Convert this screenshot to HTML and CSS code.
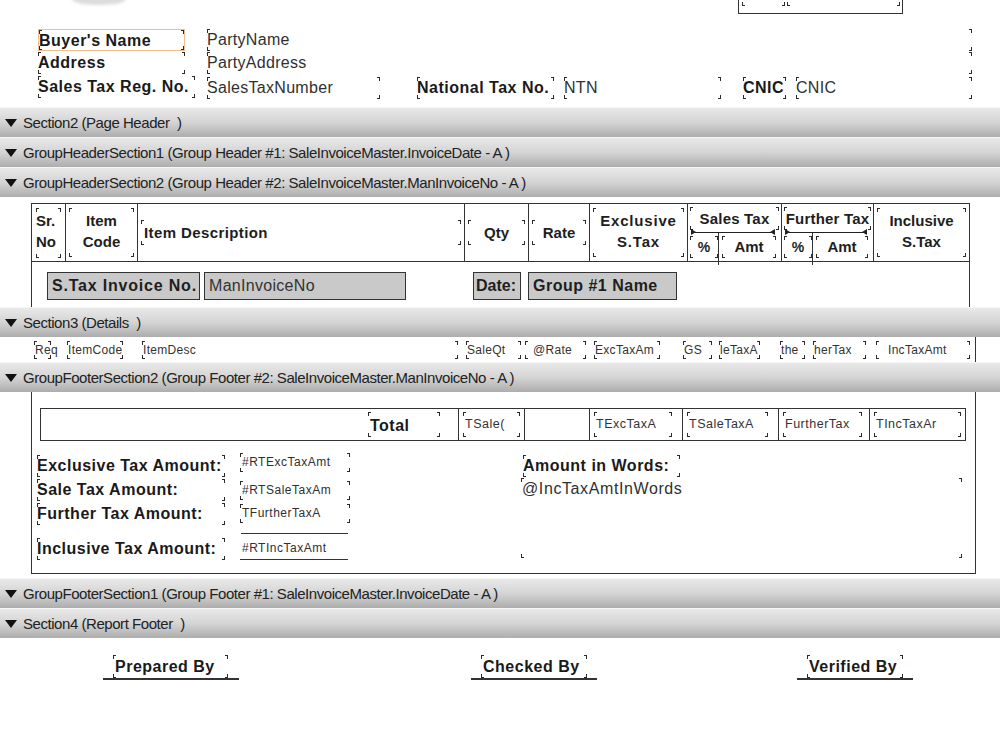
FILE: index.html
```html
<!DOCTYPE html>
<html>
<head>
<meta charset="utf-8">
<title>Sale Invoice Report Designer</title>
<link rel="stylesheet" href="styles.css">
</head>
<body>
<div class="sec rh">
  <div class="logo"></div>
  <div class="topbox"><div class="f tb1"></div><div class="f tb2"></div></div>
  <div class="f o b sel buyer">Buyer's Name</div>
  <div class="f o b addr">Address</div>
  <div class="f o b stax">Sales Tax Reg. No.</div>
  <div class="f o pname">PartyName</div>
  <div class="f o paddr">PartyAddress</div>
  <div class="f o stn">SalesTaxNumber</div>
  <div class="f o b ntl">National Tax No.</div>
  <div class="f o ntn">NTN</div>
  <div class="f o b cnicl">CNIC</div>
  <div class="f o cnic">CNIC</div>
</div>

<div class="bar">Section2 (Page Header&nbsp; )</div>
<div class="bar">GroupHeaderSection1 (Group Header #1: SaleInvoiceMaster.InvoiceDate - A )</div>
<div class="bar">GroupHeaderSection2 (Group Header #2: SaleInvoiceMaster.ManInvoiceNo - A )</div>

<div class="sec gh2">
  <div class="itable">
    <div class="ihead">
      <div class="hc"><div class="f hf two">Sr.<br>No</div></div>
      <div class="hc"><div class="f hf two ctr">Item<br>Code</div></div>
      <div class="hc mid"><div class="f hf1 desc">Item Description</div></div>
      <div class="hc mid"><div class="f hf1 ctr">Qty</div></div>
      <div class="hc mid"><div class="f hf1 ctr">Rate</div></div>
      <div class="hc"><div class="f hf two ctr sp">Exclusive<br>S.Tax</div></div>
      <div class="hc split">
        <div class="f stop">Sales Tax</div>
        <div class="arr"></div>
        <div class="sub"><div class="f pc">%</div><div class="amt"><div class="f ac">Amt</div></div></div>
      </div>
      <div class="hc split">
        <div class="f stop">Further Tax</div>
        <div class="arr"></div>
        <div class="sub"><div class="f pc">%</div><div class="amt"><div class="f ac">Amt</div></div></div>
      </div>
      <div class="hc"><div class="f hf two ctr">Inclusive<br>S.Tax</div></div>
    </div>
    <div class="ibody">
      <div class="gbox b g1">S.Tax Invoice No.</div>
      <div class="gbox g2">ManInvoiceNo</div>
      <div class="gbox b g3">Date:</div>
      <div class="gbox b g4">Group #1 Name</div>
    </div>
  </div>
</div>

<div class="bar">Section3 (Details&nbsp; )</div>

<div class="sec det">
  <div class="f d d1">Req</div>
  <div class="f d d2">ItemCode</div>
  <div class="f d d3">ItemDesc</div>
  <div class="f d d4">SaleQt</div>
  <div class="f d d5">@Rate</div>
  <div class="f d d6">ExcTaxAm</div>
  <div class="f d d7">GS</div>
  <div class="f d d8">leTaxA</div>
  <div class="f d d9">the</div>
  <div class="f d d10">herTax</div>
  <div class="f d d11">IncTaxAmt</div>
  <div class="vline"></div>
</div>

<div class="bar">GroupFooterSection2 (Group Footer #2: SaleInvoiceMaster.ManInvoiceNo - A )</div>

<div class="sec gf2">
  <div class="fbox">
    <div class="trow">
      <div class="tc tot"><div class="f b tf">Total</div></div>
      <div class="tc"><div class="f tv">TSale(</div></div>
      <div class="tc"></div>
      <div class="tc"><div class="f tv">TExcTaxA</div></div>
      <div class="tc"><div class="f tv">TSaleTaxA</div></div>
      <div class="tc"><div class="f tv">FurtherTax</div></div>
      <div class="tc"><div class="f tv">TIncTaxAr</div></div>
    </div>
    <div class="f o b lab l1">Exclusive Tax Amount:</div>
    <div class="f o b lab l2">Sale Tax Amount:</div>
    <div class="f o b lab l3">Further Tax Amount:</div>
    <div class="f o b lab l4">Inclusive Tax Amount:</div>
    <div class="f o val v1">#RTExcTaxAmt</div>
    <div class="f o val v2">#RTSaleTaxAm</div>
    <div class="f o val v3">TFurtherTaxA</div>
    <div class="hl"></div>
    <div class="o val v4">#RTIncTaxAmt</div>
    <div class="f o b aw">Amount in Words:</div>
    <div class="f o words">@IncTaxAmtInWords</div>
  </div>
</div>

<div class="bar">GroupFooterSection1 (Group Footer #1: SaleInvoiceMaster.InvoiceDate - A )</div>
<div class="bar">Section4 (Report Footer&nbsp; )</div>

<div class="sec rf">
  <div class="sig s1"><div class="f b sf">Prepared By</div></div>
  <div class="sig s2"><div class="f b sf">Checked By</div></div>
  <div class="sig s3"><div class="f b sf">Verified By</div></div>
</div>
</body>
</html>
```

FILE: styles.css
```css
* { box-sizing: border-box; margin: 0; padding: 0; }

body {
  width: 1000px;
  height: 750px;
  overflow: hidden;
  background: #fff;
  font-family: "Liberation Sans", Arial, sans-serif;
  color: #1e1e1e;
}

.sec { position: relative; }
.rh { height: 107px; }
.gh2 { height: 110px; padding-top: 6px; }
.det { height: 25px; }
.gf2 { height: 186px; }
.rf { height: 112px; }

/* section bars */
.bar {
  height: 30px;
  border-top: 1px solid #f6f6f6;
  background: linear-gradient(#e9e9e9, #d4d4d4 50%, #adadad);
  display: flex;
  align-items: center;
  padding-left: 5px;
  font-size: 15px;
  letter-spacing: -0.45px;
  color: #222;
  white-space: nowrap;
}
.bar::before {
  content: "";
  border-left: 6.5px solid transparent;
  border-right: 6.5px solid transparent;
  border-top: 8px solid #111;
  margin-right: 6px;
}

/* field object with corner marks */
.f {
  --c: #2a2a2a;
  background:
    linear-gradient(var(--c), var(--c)) 0 0 / 1px 4px no-repeat,
    linear-gradient(var(--c), var(--c)) 0 0 / 3px 1px no-repeat,
    linear-gradient(var(--c), var(--c)) 100% 0 / 1px 4px no-repeat,
    linear-gradient(var(--c), var(--c)) 100% 0 / 3px 1px no-repeat,
    linear-gradient(var(--c), var(--c)) 0 100% / 1px 4px no-repeat,
    linear-gradient(var(--c), var(--c)) 0 100% / 3px 1px no-repeat,
    linear-gradient(var(--c), var(--c)) 100% 100% / 1px 4px no-repeat,
    linear-gradient(var(--c), var(--c)) 100% 100% / 3px 1px no-repeat;
  white-space: nowrap;
  overflow: hidden;
}
.o {
  position: absolute;
  height: 22px;
  line-height: 22px;
  font-size: 16px;
  letter-spacing: 0.3px;
  color: #303030;
}
.b { font-weight: bold; color: #1a1a1a; letter-spacing: 0.5px; }

/* report header */
.logo {
  position: absolute; left: 72px; top: -6px; width: 54px; height: 11px;
  border-radius: 50%; background: #dcdcdc; filter: blur(1.5px);
}
.topbox {
  position: absolute; left: 738px; top: -6px; width: 165px; height: 20px;
  border: 1px solid #333;
}
.topbox .f { position: absolute; top: -4px; height: 15px; }
.tb1 { left: 3px; width: 43px; }
.tb2 { left: 48px; width: 113px; }

.sel { border: 1px solid #efc08e; }
.buyer { left: 38px; top: 29px; width: 147px; }
.addr { left: 38px; top: 52px; width: 147px; }
.stax { left: 38px; top: 76px; width: 157px; }
.pname { left: 207px; top: 29px; width: 765px; }
.paddr { left: 207px; top: 52px; width: 765px; }
.stn { left: 207px; top: 77px; width: 173px; }
.ntl { left: 417px; top: 77px; width: 137px; }
.ntn { left: 564px; top: 77px; width: 157px; }
.cnicl { left: 743px; top: 77px; width: 43px; }
.cnic { left: 796px; top: 77px; width: 176px; }

/* group header 2 table */
.itable {
  margin-left: 31px;
  width: 939px;
  height: 104px;
  border: 1px solid #333;
  border-bottom: none;
}
.ihead {
  display: grid;
  grid-template-columns: 33px 72px 327px 64px 61px 98px 94px 92px 96px;
  height: 58px;
  border-bottom: 1px solid #333;
  font-weight: bold;
  font-size: 15px;
  color: #1e1e1e;
}
.hc {
  border-left: 1px solid #333;
  padding: 4px 3px;
  display: flex;
}
.hc:first-child { border-left: none; padding: 4px 4px 3px 4px; }
.hc.mid { align-items: center; }
.hf { flex: 1; line-height: 21px; padding-top: 2px; }
.hf1 { flex: 1; height: 25px; line-height: 25px; }
.two { white-space: nowrap; }
.ctr { text-align: center; }
.sp { letter-spacing: 0.8px; }
.desc { padding-left: 3px; letter-spacing: 0.4px; }

.split { flex-direction: column; padding: 3px 2px 0 2px; }
.stop { height: 23px; line-height: 23px; text-align: center; letter-spacing: 0.2px; }
.arr {
  position: relative;
  height: 1px;
  background: #222;
  margin: 2px 4px 0 1px;
}
.arr::before, .arr::after {
  content: "";
  position: absolute;
  top: -3px;
  border-top: 3.5px solid transparent;
  border-bottom: 3.5px solid transparent;
}
.arr::before { left: 0; border-left: 5px solid #222; }
.arr::after { right: 0; border-right: 5px solid #222; }
.sub { display: grid; grid-template-columns: 28px 1fr; flex: 1; margin-bottom: -4px; }
.pc { height: 22px; margin-top: 3px; line-height: 22px; font-size: 14px; text-align: center; }
.amt { border-left: 1px solid #333; padding: 3px 3px 0 3px; }
.ac { height: 22px; line-height: 22px; text-align: center; }

.ibody {
  display: flex;
  padding: 10px 0 0 15px;
}
.gbox {
  height: 28px;
  line-height: 26px;
  border: 1px solid #333;
  background: #c9c9c9;
  font-size: 16px;
  padding-left: 4px;
  color: #1e1e1e;
  white-space: nowrap;
}
.gbox:not(.b) { font-weight: normal; color: #333; letter-spacing: 0.3px; }
.g1 { width: 153px; letter-spacing: 0.8px; }
.g2 { width: 202px; margin-left: 4px; }
.g3 { width: 48px; margin-left: 67px; padding-left: 2px; letter-spacing: 0; }
.g4 { width: 149px; margin-left: 7px; }

/* details */
.d {
  position: absolute;
  top: 4px;
  height: 18px;
  line-height: 18px;
  font-size: 12px;
  letter-spacing: 0.3px;
  color: #333;
  padding-left: 1px;
  overflow: visible;
}
.d1 { left: 34px; width: 17px; }
.d2 { left: 67px; width: 56px; }
.d3 { left: 142px; width: 316px; }
.d4 { left: 466px; width: 55px; }
.d5 { left: 525px; width: 61px; padding-left: 8px; }
.d6 { left: 594px; width: 66px; }
.d7 { left: 683px; width: 29px; }
.d8 { left: 719px; width: 41px; }
.d9 { left: 780px; width: 25px; }
.d10 { left: 813px; width: 53px; }
.d11 { left: 876px; width: 94px; padding-left: 12px; }
.vline { position: absolute; left: 975px; top: 0; width: 1px; height: 25px; background: #333; }

/* group footer 2 */
.fbox {
  position: relative;
  margin-left: 31px;
  width: 945px;
  height: 182px;
  border: 1px solid #333;
  border-top: none;
  padding: 16px 0 0 8px;
}
.trow {
  display: grid;
  grid-template-columns: 417px 66px 65px 93px 96px 91px 96px;
  width: 926px;
  height: 33px;
  border: 1px solid #333;
}
.tc { border-left: 1px solid #333; padding: 3px 4px; display: flex; }
.tc:first-child { border-left: none; }
.tot { justify-content: flex-end; padding-right: 18px; }
.tf { width: 72px; height: 25px; line-height: 27px; font-size: 16px; padding-left: 2px; }
.tv { flex: 1; height: 25px; line-height: 25px; font-size: 12.5px; letter-spacing: 0.5px; color: #333; padding-left: 2px; }
.tc:nth-child(4) .tv { margin-right: 6px; }
.tc:nth-child(5) .tv { margin-right: 6px; }
.tc:nth-child(6) .tv { margin-right: 3px; }

.lab { left: 5px; width: 188px; }
.l1 { top: 63px; }
.l2 { top: 87px; }
.l3 { top: 111px; }
.l4 { top: 146px; }
.val {
  left: 208px;
  width: 110px;
  height: 19px;
  line-height: 19px;
  font-size: 12px;
  letter-spacing: 0.5px;
  padding-left: 2px;
}
.v1 { top: 61px; }
.v2 { top: 89px; }
.v3 { top: 112px; }
.v4 { top: 147px; width: 108px; border-bottom: 1px solid #333; height: 21px; }
.hl { position: absolute; left: 209px; top: 141px; width: 107px; height: 1px; background: #333; }
.aw { left: 491px; top: 63px; width: 157px; }
.words { left: 489px; top: 86px; width: 441px; height: 80px; line-height: 22px; padding-left: 1px; letter-spacing: 0.6px; }

/* report footer */
.sig {
  position: absolute;
  top: 17px;
  height: 25px;
  border-bottom: 2px solid #333;
  padding-left: 10px;
}
.s1 { left: 103px; width: 136px; }
.s2 { left: 471px; width: 126px; }
.s3 { left: 797px; width: 116px; }
.sf { height: 23px; line-height: 24px; font-size: 16px; padding-left: 2px; }
.s1 .sf { width: 115px; }
.s2 .sf { width: 106px; }
.s3 .sf { width: 96px; }
```
